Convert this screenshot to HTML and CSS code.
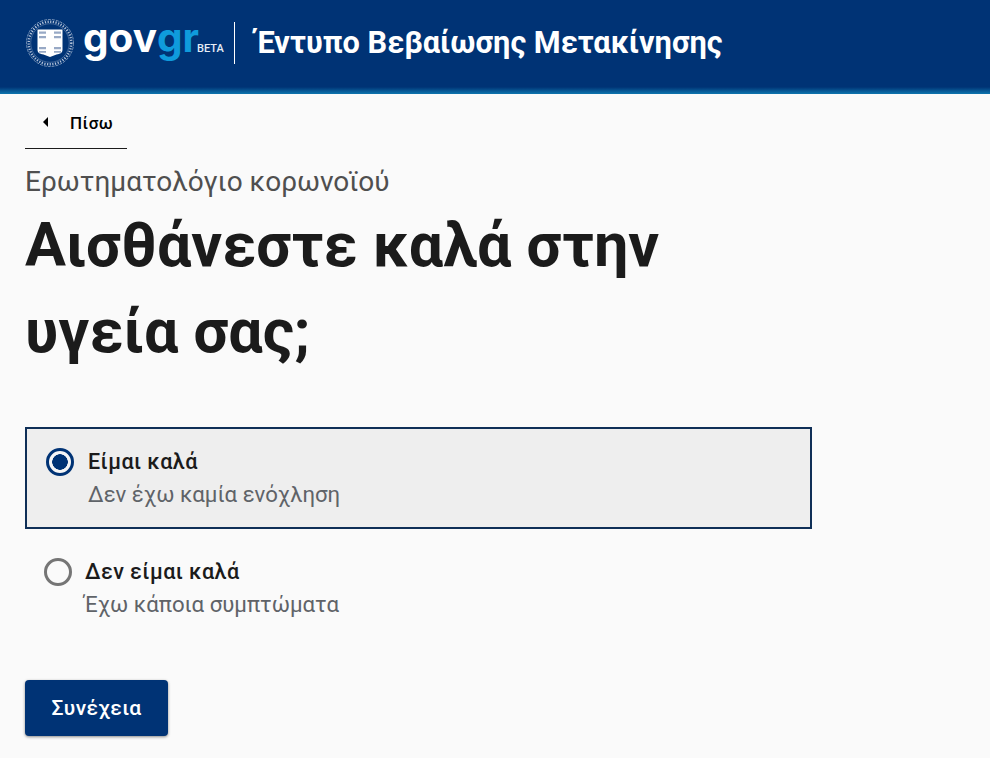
FILE: index.html
```html
<!DOCTYPE html>
<html lang="el">
<head>
<meta charset="utf-8">
<title>Έντυπο Βεβαίωσης Μετακίνησης</title>
<link rel="stylesheet" href="styles.css">
</head>
<body>
<header class="topbar">
  <svg class="emblem" width="50" height="50" viewBox="0 0 50 50" aria-hidden="true">
    <circle cx="25" cy="25" r="23.500" fill="none" stroke="#a9bad3" stroke-width=".7" stroke-dasharray="3 1"/>
    <circle cx="25" cy="25" r="21.300" fill="none" stroke="#b4c3d9" stroke-width="2.400" stroke-dasharray="1.200 1.500"/>
    <circle cx="25" cy="25" r="19.300" fill="none" stroke="#7f96ba" stroke-width=".5"/>
    <path d="M12.500 11.500h25v20c0 3.500-2.500 4.500-6 5l-6.500 2.500-6.500-2.500c-3.500-.5-6-1.500-6-5z" fill="#fff"/>
    <path d="M14 13.500h7v2.200h-7zM14 18h7v2.200h-7zM14 29h7v2.200h-7zM14 33h7v1.800h-7zM29 13.500h7v2.200h-7zM29 18h7v2.200h-7zM29 29h7v2.200h-7zM29 33h7v1.800h-7z" fill="#98a9c5"/>
  </svg>
  <div class="logo"><span class="logo-gov">gov</span><span class="logo-gr">gr</span><span class="logo-beta">BETA</span></div>
  <div class="divider"></div>
  <div class="service">Έντυπο Βεβαίωσης Μετακίνησης</div>
</header>
<main class="content">
  <a class="back" href="#"><span class="back-arrow"></span><span>Πίσω</span></a>
  <p class="caption">Ερωτηματολόγιο κορωνοϊού</p>
  <h1 class="title">Αισθάνεστε καλά στην υγεία σας;</h1>
  <div class="options">
    <label class="option option-on">
      <span class="radio radio-on"></span>
      <span class="option-text"><span class="option-label">Είμαι καλά</span><span class="option-hint">Δεν έχω καμία ενόχληση</span></span>
    </label>
    <label class="option option-off">
      <span class="radio"></span>
      <span class="option-text"><span class="option-label">Δεν είμαι καλά</span><span class="option-hint">Έχω κάποια συμπτώματα</span></span>
    </label>
  </div>
  <button class="next" type="button">Συνέχεια</button>
</main>
</body>
</html>
```
FILE: styles.css
```css
* { box-sizing: border-box; }
html, body { margin: 0; padding: 0; }
body {
  width: 990px;
  height: 758px;
  overflow: hidden;
  background: #fafafa;
  font-family: Roboto, "Liberation Sans", sans-serif;
  color: #1b1b1b;
}
.topbar {
  height: 94px;
  background: linear-gradient(#003375 0, #003375 87px, #0e75ae 94px);
  display: flex;
  align-items: center;
  padding: 0 0 8px 25px;
  color: #fff;
}
.emblem { flex: none; }
.logo {
  display: flex;
  align-items: baseline;
  margin-left: 8px;
  font-family: Inter, sans-serif;
  font-weight: 700;
  width: 151px;
  flex: none;
  height: 50px;
  line-height: 40px;
}
.logo-gov, .logo-gr { font-size: 40.500px; letter-spacing: 0; }
.logo-gov { color: #fff; }
.logo-gr { color: #0f9bdc; }
.logo-beta { font-size: 11px; font-family: Roboto, sans-serif; font-weight: 500; margin-left: -2px; color: #e6edf6; }
.divider { width: 1px; height: 42px; background: #fff; flex: none; }
.service {
  margin-left: 21px;
  font-size: 30.700px;
  font-weight: 700;
  line-height: 40px;
  white-space: nowrap;
}
.content { padding: 0 25px; }
.back {
  display: flex;
  align-items: center;
  width: 102px;
  height: 55px;
  padding: 3px 0 0 18px;
  border-bottom: 1px solid #1b1b1b;
  color: #000;
  font-size: 17px;
  font-weight: 500;
  letter-spacing: .5px;
  text-decoration: none;
}
.back-arrow {
  width: 0;
  height: 0;
  border-top: 5px solid transparent;
  border-bottom: 5px solid transparent;
  border-right: 5px solid #000;
  margin-right: 22px;
  margin-top: -1px;
}
.caption {
  margin: 17px 0 0;
  font-size: 28px;
  line-height: 32px;
  color: #4f4f4f;
}
.title {
  margin: 4px 0 0;
  width: 700px;
  font-size: 61px;
  line-height: 86px;
  font-weight: 700;
  color: #1b1b1b;
}
.options { margin-top: 53px; width: 787px; }
.option { display: flex; width: 787px; }
.option-on {
  height: 102px;
  padding: 19px 19px;
  background: #eeeeee;
  border: 2px solid #0f2f57;
  gap: 14px;
}
.option-off { height: 104px; padding: 29px 19px; gap: 13px; }
.radio {
  flex: none;
  width: 28px;
  height: 28px;
  border-radius: 50%;
  border: 3px solid #757575;
  background: #fafafa;
}
.radio-on {
  border-color: #003375;
  background: radial-gradient(circle, #003375 0 7.500px, #f6f6f6 8px);
}
.option-text { display: flex; flex-direction: column; }
.option-label { font-size: 21.500px; font-weight: 500; line-height: 28px; letter-spacing: .45px; }
.option-hint { font-size: 22.200px; line-height: 28px; margin-top: 4px; color: #5f6368; }
.option-off .option-hint { margin: 4px 0 0 -1px; }
.next {
  display: block;
  margin-top: 47px;
  width: 143px;
  height: 56px;
  border: 0;
  border-radius: 4px;
  background: #003375;
  box-shadow: 0 1px 3px rgba(0,0,0,.45);
  color: #fff;
  font-family: inherit;
  font-size: 21px;
  font-weight: 500;
  letter-spacing: .4px;
}
```
